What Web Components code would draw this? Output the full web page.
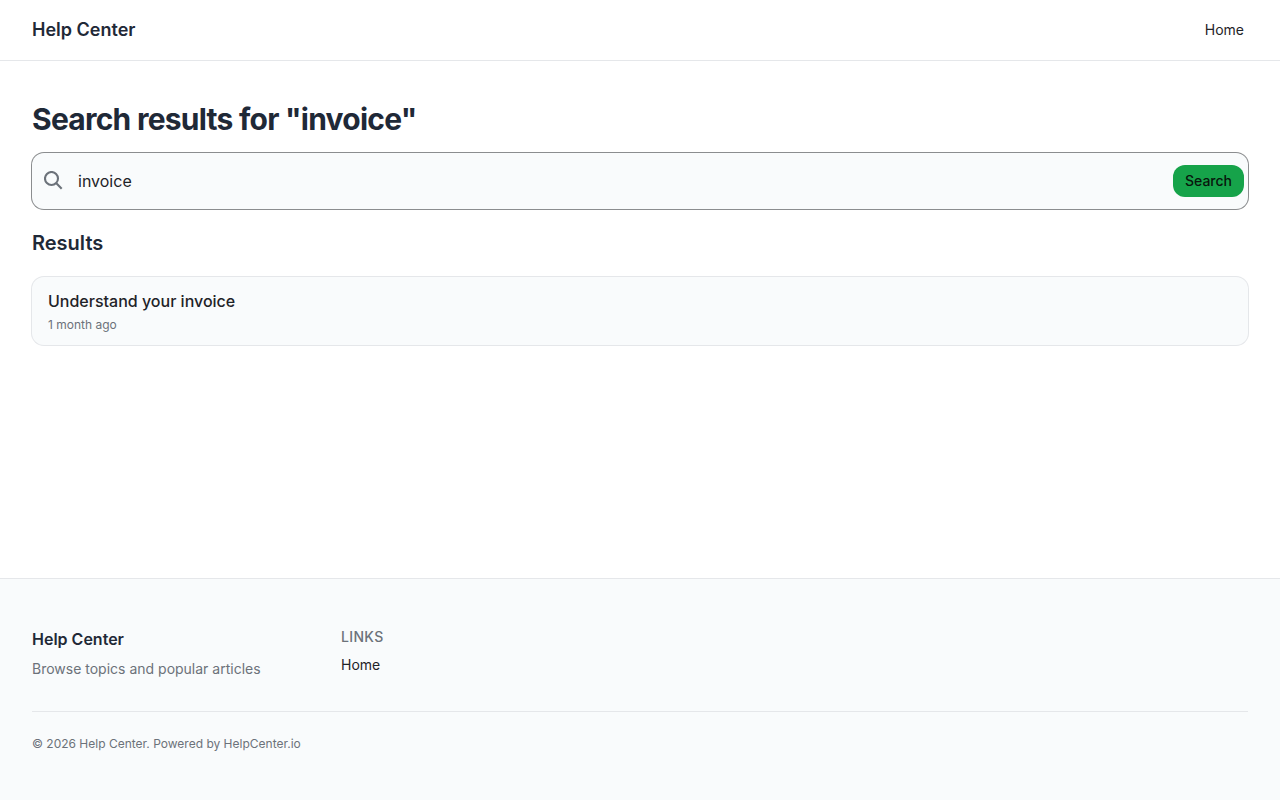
<!DOCTYPE html>
<html lang="en">
<head>
<meta charset="utf-8">
<meta name="viewport" content="width=device-width, initial-scale=1">
<title>Search results - Help Center</title>
<style>
:root {
  --ink: #1f2937;
  --text: #1f2328;
  --muted: #6c727a;
  --line: #e5e7ea;
  --surface: #f9fbfc;
  --accent: #16a34a;
}
body {
  margin: 0;
  background: #fff;
  color: var(--text);
  font-family: Inter, "Liberation Sans", sans-serif;
  font-size: 16px;
  line-height: 24px;
}
</style>
</head>
<body>
<help-page>
  <site-header slot="header" name="Help Center"><a href="#home">Home</a></site-header>
  <search-form query="invoice"></search-form>
  <result-list heading="Results">
    <result-card href="#understand-your-invoice">Understand your invoice<span slot="date">1 month ago</span></result-card>
  </result-list>
  <site-footer slot="footer">
    <span slot="name">Help Center</span>
    <span slot="about">Browse topics and popular articles</span>
    <span slot="legal">© 2026 Help Center. Powered by HelpCenter.io</span>
  </site-footer>
</help-page>
<script>
function define(name, markup, setup) {
  const template = document.createElement('template');
  template.innerHTML = markup;
  customElements.define(name, class extends HTMLElement {
    constructor() {
      super();
      this.attachShadow({ mode: 'open' }).append(template.content.cloneNode(true));
    }
    connectedCallback() {
      if (setup) setup(this, this.shadowRoot);
    }
  });
}

define('help-page', `
<style>
:host { display: flex; flex-direction: column; min-height: 100vh; }
main { flex: 1; padding: 40px 32px; }
</style>
<slot name="header"></slot>
<main><slot></slot></main>
<slot name="footer"></slot>`);

define('site-header', `
<style>
:host { display: block; border-bottom: 1px solid var(--line); }
header { display: flex; align-items: center; justify-content: space-between; height: 60px; padding: 0 36px 0 32px; }
nav { display: flex; gap: 24px; }
.name { color: var(--ink); font-size: 18px; line-height: 28px; font-weight: 600; text-decoration: none; }
::slotted(a) { color: var(--text); font-size: 14px; line-height: 20px; text-decoration: none; }
</style>
<header><a class="name" href="#top"></a><nav><slot></slot></nav></header>`,
(host, root) => { root.querySelector('.name').textContent = host.getAttribute('name'); });

define('search-form', `
<style>
:host { display: block; }
h1 { margin: 0 0 16px; color: var(--ink); font-size: 30px; line-height: 36px; font-weight: 700; letter-spacing: -0.025em; }
form { display: flex; align-items: center; height: 56px; padding: 0 4px 0 12px; box-sizing: border-box; border-radius: 12px; background: var(--surface); box-shadow: 0 0 0 1px #8b8d8f; }
svg { flex: none; width: 20px; height: 20px; color: var(--muted); }
input { flex: 1; min-width: 0; height: 56px; margin: 0; padding: 0 14px; border: 0; outline: 0; background: none; color: var(--text); font: inherit; }
button { height: 32px; padding: 0 12px; border: 0; border-radius: 12px; background: var(--accent); color: #08150c; font: 500 14px/20px Inter, "Liberation Sans", sans-serif; }
</style>
<h1></h1>
<form role="search">
  <svg viewBox="0 0 20 20" fill="none" stroke="currentColor" stroke-width="2.1" aria-hidden="true"><circle cx="7.5" cy="7.5" r="6.5"/><path d="M12.1 12.1l5.6 5.6"/></svg>
  <input type="text" name="q" aria-label="Search articles">
  <button type="submit">Search</button>
</form>`,
(host, root) => {
  const query = host.getAttribute('query');
  root.querySelector('h1').textContent = 'Search results for "' + query + '"';
  root.querySelector('input').value = query;
});

define('result-list', `
<style>
:host { display: block; }
h2 { margin: 20px 0; color: var(--ink); font-size: 20px; line-height: 28px; font-weight: 600; }
div { display: grid; gap: 16px; }
</style>
<h2></h2><div><slot></slot></div>`,
(host, root) => { root.querySelector('h2').textContent = host.getAttribute('heading'); });

define('result-card', `
<style>
:host { display: block; }
a { display: block; padding: 12px 16px; border-radius: 12px; background: var(--surface); box-shadow: 0 0 0 1px var(--line); color: var(--text); text-decoration: none; }
.title { display: block; font-weight: 500; }
.date { display: block; margin-top: 4px; color: var(--muted); font-size: 12px; line-height: 16px; }
</style>
<a><span class="title"><slot></slot></span><span class="date"><slot name="date"></slot></span></a>`,
(host, root) => { root.querySelector('a').href = host.getAttribute('href'); });

define('site-footer', `
<style>
:host { display: block; border-top: 1px solid var(--line); background: var(--surface); }
footer { padding: 48px 32px; color: var(--muted); font-size: 14px; line-height: 20px; }
.columns { display: grid; grid-template-columns: repeat(4, 1fr); gap: 20px; }
.name { color: var(--ink); font-size: 16px; line-height: 24px; font-weight: 600; }
p { margin: 8px 0 0; }
h3 { margin: 0 0 8px; font-size: 14px; line-height: 20px; font-weight: 500; letter-spacing: 0.025em; text-transform: uppercase; }
a { display: block; color: var(--text); text-decoration: none; }
.legal { margin-top: 32px; padding-top: 24px; border-top: 1px solid var(--line); font-size: 12px; line-height: 16px; }
</style>
<footer>
  <div class="columns">
    <div><div class="name"><slot name="name"></slot></div><p><slot name="about"></slot></p></div>
    <nav><h3>Links</h3><a href="#home">Home</a></nav>
  </div>
  <div class="legal"><slot name="legal"></slot></div>
</footer>`);
</script>
</body>
</html>
